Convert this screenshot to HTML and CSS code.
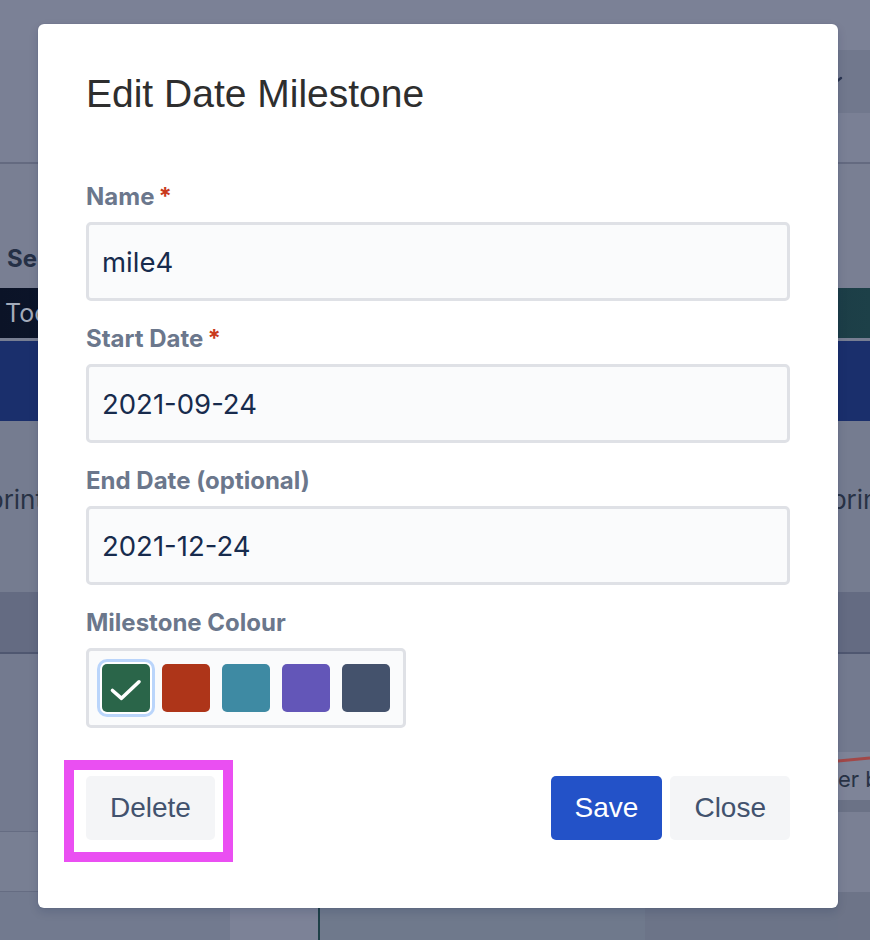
FILE: index.html
```html
<!DOCTYPE html>
<html lang="en">
<head>
<meta charset="utf-8">
<title>Edit Date Milestone</title>
<link rel="stylesheet" href="styles.css">
</head>
<body>
<div class="page">
  <div class="bg-nav"></div>
  <div class="bg-toolbar">
    <div class="bg-select">
      <svg class="bg-chevron" viewBox="0 0 14 8" width="14" height="8"><path d="M2 2 L7 6 L12 2" fill="none" stroke="#2a3550" stroke-width="2.4" stroke-linecap="round" stroke-linejoin="round"/></svg>
    </div>
  </div>
  <div class="bg-space"></div>
  <div class="bg-section"><div class="bg-heading-clip"><span class="bg-heading">Se</span></div></div>
  <div class="bg-today"><span class="bg-today-text">Too</span></div>
  <div class="bg-blue"></div>
  <div class="bg-sprint">
    <div class="bg-sprint-l"><span>Sprint</span></div>
    <div></div>
    <div class="bg-sprint-r"><span>Sprint</span></div>
  </div>
  <div class="bg-band"></div>
  <div class="bg-lower">
    <div class="col col-a">
      <div class="a1"></div>
      <div class="a2"></div>
      <div class="a3"></div>
    </div>
    <div class="col col-b"></div>
    <div class="col col-c"></div>
    <div class="col col-d"></div>
    <div class="col col-e"></div>
    <div class="col col-f">
      <div class="f1"></div>
      <div class="f2">
        <svg class="f2-line" viewBox="0 0 32 14" width="32" height="14" preserveAspectRatio="none"><path d="M0 9 L32 6" stroke="#a24848" stroke-width="3" fill="none"/></svg>
        <span class="f2-text">er b</span>
      </div>
      <div class="f3"></div>
      <div class="f4"></div>
      <div class="f5"></div>
    </div>
  </div>
</div>

<div class="modal" role="dialog" aria-labelledby="dlg-title">
  <h1 class="modal-title" id="dlg-title">Edit Date Milestone</h1>

  <div class="field">
    <div class="label">Name<span class="req">*</span></div>
    <div class="input">mile4</div>
  </div>

  <div class="field">
    <div class="label">Start Date<span class="req">*</span></div>
    <div class="input">2021-09-24</div>
  </div>

  <div class="field">
    <div class="label">End Date (optional)</div>
    <div class="input">2021-12-24</div>
  </div>

  <div class="field field-last">
    <div class="label">Milestone Colour</div>
    <div class="swatches">
      <div class="swatch sw-green selected">
        <svg viewBox="0 0 48 48" width="48" height="48"><path d="M10.5 26.5 L19.5 34.3 L37 17.8" fill="none" stroke="#ffffff" stroke-width="3.6" stroke-linecap="round" stroke-linejoin="round"/></svg>
      </div>
      <div class="swatch sw-red"></div>
      <div class="swatch sw-teal"></div>
      <div class="swatch sw-purple"></div>
      <div class="swatch sw-slate"></div>
    </div>
  </div>

  <div class="footer">
    <div class="delete-wrap">
      <button class="btn btn-default">Delete</button>
      <div class="annot"></div>
    </div>
    <div class="actions">
      <button class="btn btn-primary">Save</button>
      <button class="btn btn-default">Close</button>
    </div>
  </div>
</div>
</body>
</html>
```

FILE: styles.css
```css
* { box-sizing: border-box; }

html, body {
  margin: 0;
  padding: 0;
}

body {
  width: 870px;
  height: 940px;
  overflow: hidden;
  position: relative;
  background: #777e92;
  font-family: "Inter", "Liberation Sans", sans-serif;
}

/* ---------- dimmed background page ---------- */
.page {
  width: 870px;
  height: 940px;
  display: flex;
  flex-direction: column;
}

.bg-nav { height: 50px; background: #7b8196; flex: none; }

.bg-toolbar {
  height: 63px;
  flex: none;
  background: #7a8095;
  display: flex;
  justify-content: flex-end;
}
.bg-select {
  width: 120px;
  background: #71788d;
  display: flex;
  justify-content: flex-end;
  align-items: flex-start;
  padding: 26px 27px 0 0;
}
.bg-chevron { display: block; }

.bg-space {
  height: 51px;
  flex: none;
  background: #7a8095;
  border-bottom: 2px solid #646a80;
}

.bg-section {
  height: 124px;
  flex: none;
  background: #797f93;
  padding: 80px 0 0 7px;
}
.bg-heading-clip {
  width: 40px;
  overflow: hidden;
  white-space: nowrap;
}
.bg-heading {
  font-weight: 700;
  font-size: 24px;
  line-height: 30px;
  color: #253046;
}

.bg-today {
  height: 50px;
  flex: none;
  background: linear-gradient(90deg, #0b1327 0%, #0f1f36 40%, #1d4048 100%);
  display: flex;
  align-items: center;
  padding-left: 5px;
}
.bg-today-text {
  font-size: 25px;
  color: #a3abba;
}

.bg-blue {
  height: 80px;
  flex: none;
  margin-top: 3px;
  background: #1a2f6c;
}

.bg-sprint {
  height: 171px;
  flex: none;
  background: #757c90;
  display: grid;
  grid-template-columns: 44px 770px 56px;
  padding-top: 63px;
  align-items: start;
}
.bg-sprint-l,
.bg-sprint-r {
  overflow: hidden;
  white-space: nowrap;
  display: flex;
  font-size: 26px;
  line-height: 32px;
  color: #283245;
}
.bg-sprint-l { justify-content: flex-end; }
.bg-sprint-r { justify-content: flex-start; }

.bg-band {
  height: 62px;
  flex: none;
  background: #646b82;
  border-bottom: 2px solid #4f5770;
}

.bg-lower {
  flex: 1;
  display: grid;
  grid-template-columns: 230px 88px 2px 325px 193px 32px;
}
.col { display: flex; flex-direction: column; }

.col-a { background: #737a8f; }
.a1 { height: 178px; background: #737a8f; border-bottom: 1px solid #656c82; }
.a2 { height: 60px; background: #787f93; border-bottom: 1px solid #656c82; }
.a3 { flex: 1; background: #727a8f; }

.col-b { background: #7c8297; }
.col-c { background: #1e4048; }
.col-d { background: #6f798c; }
.col-e { background: #6c7488; }

.col-f { background: #737a8f; }
.f1 { height: 98px; }
.f2 {
  height: 48px;
  background: #7e8498;
  display: flex;
  flex-direction: column;
  overflow: hidden;
}
.f2-line { display: block; flex: none; }
.f2-text {
  font-size: 22px;
  line-height: 26px;
  color: #283245;
  white-space: nowrap;
}
.f3 { height: 12px; background: #6b7286; }
.f4 { height: 80px; background: #7a8094; }
.f5 { flex: 1; background: #6d7488; }

/* ---------- modal ---------- */
.modal {
  position: absolute;
  left: 38px;
  top: 24px;
  width: 800px;
  background: #ffffff;
  border-radius: 6px;
  padding: 48px 48px 68px;
  box-shadow: 0 0 1px rgba(9, 30, 66, 0.3), 0 4px 10px rgba(9, 30, 66, 0.15);
}

.modal-title {
  margin: 0 0 67px;
  font-family: "Liberation Sans", Arial, sans-serif;
  font-weight: 400;
  font-size: 39px;
  line-height: 44px;
  color: #2e2e2e;
}

.field { margin-bottom: 24px; }
.field-last { margin-bottom: 48px; }

.label {
  font-size: 24px;
  line-height: 28px;
  font-weight: 700;
  color: #6b778c;
  margin-bottom: 11px;
}
.req {
  color: #c93a1d;
  margin-left: 4px;
}

.input {
  height: 79px;
  border: 3px solid #dfe1e6;
  border-radius: 5px;
  background: #fafbfc;
  padding: 2px 13px 0;
  font-size: 27.5px;
  line-height: 71px;
  color: #172b4d;
}

.swatches {
  display: inline-flex;
  gap: 12px;
  padding: 13px;
  border: 3px solid #dfe1e6;
  border-radius: 5px;
  background: #fafbfc;
}
.swatch {
  width: 48px;
  height: 48px;
  border-radius: 5px;
}
.swatch svg { display: block; }
.swatch.selected {
  box-shadow: 0 0 0 2px #ffffff, 0 0 0 5px #bad5fb;
}
.sw-green { background: #2a6549; }
.sw-red { background: #ae3519; }
.sw-teal { background: #3e8aa3; }
.sw-purple { background: #6356b8; }
.sw-slate { background: #44526c; }

.footer {
  display: flex;
  justify-content: space-between;
  align-items: center;
}
.actions {
  display: flex;
  gap: 8px;
}

.btn {
  height: 64px;
  border: 0;
  border-radius: 5px;
  padding: 0 24px;
  font-family: "Liberation Sans", Arial, sans-serif;
  font-size: 28px;
  line-height: 64px;
  cursor: pointer;
}
.btn-default {
  background: #f4f5f7;
  color: #42526e;
}
.btn-primary {
  background: #2352c8;
  color: #ffffff;
}

.delete-wrap {
  position: relative;
  display: flex;
}
.annot {
  position: absolute;
  left: -22px;
  top: -16px;
  width: 169px;
  height: 102px;
  border: 10px solid #ea4ff2;
  pointer-events: none;
}
```
